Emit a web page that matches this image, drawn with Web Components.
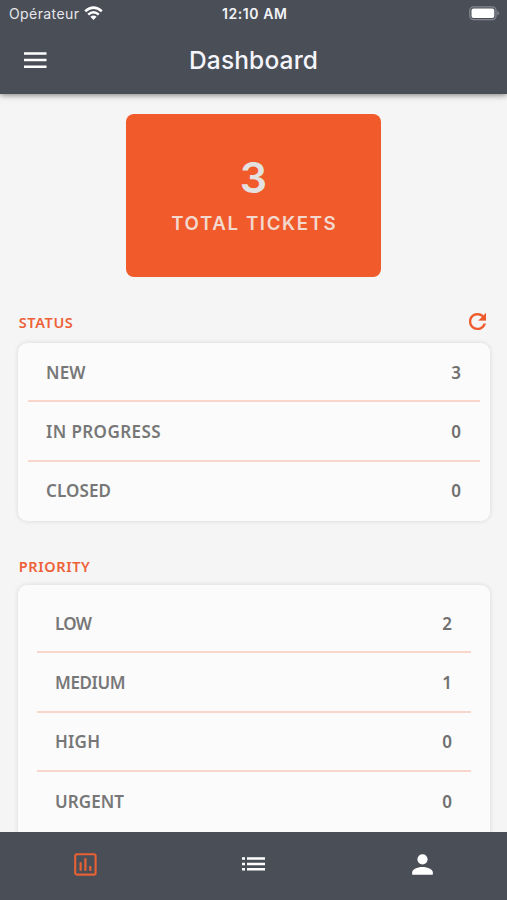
<!DOCTYPE html>
<html lang="en">
<head>
<meta charset="utf-8">
<title>Dashboard</title>
<style>
html,body{margin:0;height:100%;overflow:hidden;background:#f5f5f5;font-family:Inter,"Liberation Sans",sans-serif}
</style>
</head>
<body>
<app-shell>
  <app-header slot="top" heading="Dashboard" carrier="Opérateur" time="12:10 AM"></app-header>
  <total-card value="3" label="TOTAL TICKETS"></total-card>
  <stat-section heading="STATUS" span="54" refresh>
    <stat-row label="NEW" span="39.5" value="3"></stat-row>
    <stat-row label="IN PROGRESS" span="114.5" value="0"></stat-row>
    <stat-row label="CLOSED" span="65" value="0"></stat-row>
  </stat-section>
  <stat-section heading="PRIORITY" span="71" class="priority">
    <stat-row label="LOW" span="37" value="2"></stat-row>
    <stat-row label="MEDIUM" span="70.5" value="1"></stat-row>
    <stat-row label="HIGH" span="45" value="0"></stat-row>
    <stat-row label="URGENT" span="69" value="0"></stat-row>
  </stat-section>
  <tab-bar slot="bottom"></tab-bar>
</app-shell>
<script>
const define = (name, render, after) => customElements.define(name, class extends HTMLElement {
  connectedCallback() {
    if (this.shadowRoot) return;
    this.attachShadow({mode: 'open'}).innerHTML = render(this);
    if (after) after(this);
  }
});
const a = (el, n) => el.getAttribute(n) || '';

// Text tracked so that it fills the given width.
define('fit-text', () => `<style>:host{display:inline-block;white-space:nowrap}span{display:inline-block}</style><span><slot></slot></span>`, el => {
  const s = el.shadowRoot.querySelector('span');
  const n = el.textContent.length;
  const ls = (parseFloat(a(el, 'span')) - s.getBoundingClientRect().width) / (n - 1);
  s.style.letterSpacing = ls.toFixed(3) + 'px';
  s.style.marginRight = (-ls).toFixed(3) + 'px';
});

define('app-shell', () => `<style>
:host{display:flex;flex-direction:column;height:100vh;background:#f5f5f5}
main{flex:1;min-height:0;overflow:hidden;padding:20px 17px 0 18px;display:flex;flex-direction:column}
</style><slot name="top"></slot><main><slot></slot></main><slot name="bottom"></slot>`);

define('app-header', el => `<style>
:host{display:block;flex:none;height:94px;background:#4a4e57;color:#fff;box-shadow:0 1px 6px rgba(0,0,0,.5);z-index:1}
.s{display:grid;grid-template-columns:1fr auto 1fr;align-items:center;height:27px;padding:0 7px 0 9px;font-size:14px}
.l{display:flex;align-items:center;gap:5px;color:#e6e7ec}
.t{font-weight:600;color:#f2f3f6}
.b{justify-self:end;display:flex}
.n{display:grid;grid-template-columns:1fr auto 1fr;align-items:center;height:65px;padding:0 24px 0 24px}
.h{font-size:24.5px;font-weight:500;color:#f4f5fb}
svg{display:block}
</style>
<div class="s"><div class="l"><fit-text span="70">${a(el,'carrier')}</fit-text>
<svg width="19" height="15" viewBox="0 0 19 15"><g fill="none" stroke="#fff" stroke-width="2.5"><path d="M1.2 5.3Q9.5-2 17.8 5.3"/><path d="M4.2 8.6Q9.5 3.9 14.8 8.6"/></g><path d="M6.4 10.8Q9.5 8.3 12.6 10.8L9.5 14Z" fill="#fff"/></svg></div>
<fit-text class="t" span="65">${a(el,'time')}</fit-text>
<svg class="b" width="31" height="15" viewBox="0 0 31 15"><rect x=".8" y=".8" width="26.2" height="12.8" rx="3.8" fill="none" stroke="#83868d" stroke-width="1.3"/><rect x="2.5" y="2.5" width="22.8" height="9.4" rx="2" fill="#fff"/><path d="M28.3 4.8q3.6 2.4 0 4.8z" fill="#83868d"/></svg></div>
<div class="n"><svg width="23" height="16" viewBox="0 0 23 16"><path d="M0 1.4H22.5M0 8.1H22.5M0 14.7H22.5" stroke="#fff" stroke-width="2.5"/></svg>
<fit-text class="h" span="129">${a(el,'heading')}</fit-text></div>`);

define('total-card', el => `<style>
:host{align-self:center;flex:none;width:255px;margin-right:1px;height:163px;border-radius:8px;background:#f15a2b;display:flex;flex-direction:column;align-items:center;color:#e4e2e0;box-sizing:border-box;padding-top:37px}
.v{font-size:43px;font-weight:600;line-height:52px}
.l{font-size:18.7px;font-weight:600;line-height:24px;margin-top:9px;color:#f3d8ce}
</style><div class="v">${a(el,'value')}</div><fit-text class="l" span="164.5">${a(el,'label')}</fit-text>`);

define('stat-section', el => `<style>
:host{display:block;flex:none;margin-top:32.5px}
header{display:flex;justify-content:space-between;align-items:center;height:24px;padding:0 4px 0 .8px;margin-bottom:9.5px;color:#ee6138;font:600 14.5px "Noto Sans",sans-serif}
section{background:#fbfbfb;border-radius:9px;box-shadow:0 0 5px rgba(0,0,0,.12);padding:0 10px;height:178px}
:host(.priority){margin-top:33px}
:host(.priority) header{margin-bottom:7px}
:host(.priority) section{padding:9px 19px;height:300px}
svg{display:block}
</style><header><fit-text span="${a(el,'span')}">${a(el,'heading')}</fit-text>${el.hasAttribute('refresh') ? `<svg width="17" height="17" viewBox="4 4 16 16"><path fill="#ee5a2c" d="M17.65 6.35C16.2 4.9 14.21 4 12 4c-4.42 0-7.99 3.58-7.99 8s3.57 8 7.99 8c3.73 0 6.84-2.55 7.73-6h-2.08c-.82 2.33-3.04 4-5.65 4-3.31 0-6-2.69-6-6s2.69-6 6-6c1.66 0 3.14.69 4.22 1.78L13 11h7V4l-2.35 2.35z" stroke="#ee5a2c" stroke-width=".3"/></svg>` : ''}</header><section><slot></slot></section>`);

define('stat-row', el => `<style>
:host{display:flex;justify-content:space-between;align-items:center;box-sizing:border-box;height:59.4px;padding:1px 19px 0 18px;border-bottom:2px solid #f9d6cb;color:#777;font:600 17px "Noto Sans",sans-serif}
:host(:last-child){border-bottom-color:transparent}
b{font-weight:600;color:#707070}
</style><fit-text span="${a(el,'span')}">${a(el,'label')}</fit-text><b>${a(el,'value')}</b>`);

define('tab-bar', () => `<style>
:host{flex:none;display:grid;grid-template-columns:repeat(3,1fr);height:68.5px;background:#4a4e57;justify-items:center;align-items:center;box-sizing:border-box;padding-bottom:3px}
svg{display:block}
svg:first-of-type{margin-left:2px}
</style>
<svg width="23" height="23" viewBox="0 0 23 23"><rect x="1.2" y="1.2" width="20.4" height="20.4" rx="1.7" fill="none" stroke="#e86136" stroke-width="2.1"/><path d="M6.6 9.2V17.8M11.4 5.3V17.8M16.3 13V17.8" stroke="#e86136" stroke-width="2.2"/></svg>
<svg width="23" height="14" viewBox="0 0 23 14"><path d="M0 1.5H3M5 1.5H23M0 7H3M5 7H23M0 12.3H3M5 12.3H23" stroke="#fff" stroke-width="2.6"/></svg>
<svg width="21" height="21" viewBox="0 0 21 21"><circle cx="10.5" cy="5.3" r="5.1" fill="#fff"/><path d="M.2 20.8V18.2C.2 14.8 7 13 10.5 13s10.3 1.8 10.3 5.2v2.6z" fill="#fff"/></svg>`);
</script>
</body>
</html>
